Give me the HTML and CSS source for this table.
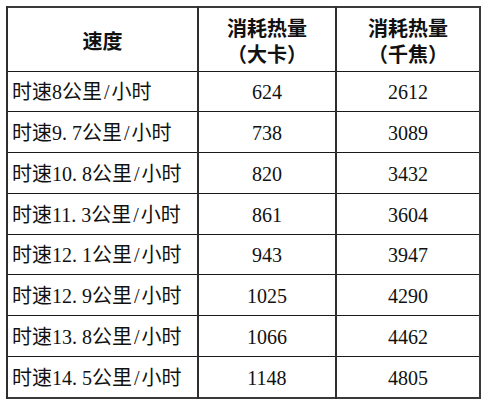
FILE: index.html
```html
<!DOCTYPE html>
<html lang="zh">
<head>
<meta charset="utf-8">
<link rel="stylesheet" href="styles.css">
</head>
<body>
<table class="calories">
  <colgroup>
    <col class="c-speed">
    <col class="c-kcal">
    <col class="c-kj">
  </colgroup>
  <thead>
    <tr>
      <th>速度</th>
      <th>消耗热量<br>（大卡）</th>
      <th>消耗热量<br>（千焦）</th>
    </tr>
  </thead>
  <tbody>
    <tr><td class="speed">时速8公里<span class="sl">/</span>小时</td><td>624</td><td>2612</td></tr>
    <tr><td class="speed">时速9<span class="dot">.</span>7公里<span class="sl">/</span>小时</td><td>738</td><td>3089</td></tr>
    <tr><td class="speed">时速10<span class="dot">.</span>8公里<span class="sl">/</span>小时</td><td>820</td><td>3432</td></tr>
    <tr><td class="speed">时速11<span class="dot">.</span>3公里<span class="sl">/</span>小时</td><td>861</td><td>3604</td></tr>
    <tr><td class="speed">时速12<span class="dot">.</span>1公里<span class="sl">/</span>小时</td><td>943</td><td>3947</td></tr>
    <tr><td class="speed">时速12<span class="dot">.</span>9公里<span class="sl">/</span>小时</td><td>1025</td><td>4290</td></tr>
    <tr><td class="speed">时速13<span class="dot">.</span>8公里<span class="sl">/</span>小时</td><td>1066</td><td>4462</td></tr>
    <tr><td class="speed">时速14<span class="dot">.</span>5公里<span class="sl">/</span>小时</td><td>1148</td><td>4805</td></tr>
  </tbody>
</table>
</body>
</html>
```

FILE: styles.css
```css
html, body {
  margin: 0;
  padding: 0;
  background: #ffffff;
}

body {
  padding: 6px 0 0 6px;
  font-family: "Liberation Serif", "Noto Sans CJK SC", serif;
  color: #111111;
}

.calories {
  border-collapse: collapse;
  table-layout: fixed;
  width: 473px;
  border: 2px solid #3a3a3a;
  font-size: 20px;
}

.c-speed { width: 191px; }
.c-kcal { width: 138px; }
.c-kj { width: 144px; }

.calories th,
.calories td {
  border-top: 1px solid #1a1a1a;
  border-left: 2px solid #2e2e2e;
  padding: 0;
  text-align: center;
  vertical-align: middle;
}

.calories th {
  height: 64px;
  padding-top: 6px;
  box-sizing: border-box;
  font-weight: 700;
  line-height: 26px;
}

.calories td {
  height: 37.75px;
  line-height: 24px;
  padding-top: 2px;
}

.calories td.speed {
  text-align: left;
  padding-left: 4px;
}

.dot {
  letter-spacing: 0.25em;
}

.sl {
  padding: 0 2px;
}
```
